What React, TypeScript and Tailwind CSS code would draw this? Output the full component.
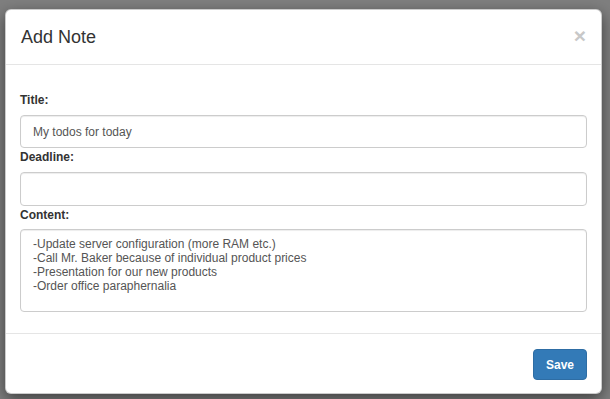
export default function App() {
  return (
    <div
      className="w-[610px] h-[399px] bg-[#7f7f7f] pt-[9px] pl-[5px] overflow-hidden"
      style={{ fontFamily: '"Liberation Sans", Arial, Helvetica, sans-serif' }}
    >
      <div className="w-[597px] h-[385px] bg-white rounded-[6px] border border-[rgba(0,0,0,0.2)] shadow-[0_5px_15px_rgba(0,0,0,0.5)] flex flex-col text-[#333]">
        <div className="h-[55px] px-[15px] flex items-center justify-between border-b border-[#e5e5e5] shrink-0">
          <h4 className="text-[18px] leading-[25px] text-[#333]">Add Note</h4>
          <span className="text-[21px] font-bold leading-none text-[#c8c8c8] -mt-[4px]">×</span>
        </div>
        <div className="flex-1 px-[14px] pt-[26px] flex flex-col">
          <label className="block text-[12px] font-bold leading-[19px] mb-[5px]">Title:</label>
          <div className="h-[33px] border border-[#ccc] rounded-[4px] shadow-[inset_0_1px_1px_rgba(0,0,0,0.075)] px-[12px] flex items-center text-[12px] text-[#555]">
            My todos for today
          </div>
          <label className="block text-[12px] font-bold leading-[19px] mb-[5px]">Deadline:</label>
          <div className="h-[34px] border border-[#ccc] rounded-[4px] shadow-[inset_0_1px_1px_rgba(0,0,0,0.075)]"></div>
          <label className="block text-[12px] font-bold leading-[19px] mb-[4px]">Content:</label>
          <div className="h-[83px] border border-[#ccc] rounded-[4px] shadow-[inset_0_1px_1px_rgba(0,0,0,0.075)] px-[12px] pt-[7px] text-[12px] leading-[14px] text-[#555]">
            <div>-Update server configuration (more RAM etc.)</div>
            <div>-Call Mr. Baker because of individual product prices</div>
            <div>-Presentation for our new products</div>
            <div>-Order office paraphernalia</div>
          </div>
        </div>
        <div className="h-[60px] border-t border-[#e5e5e5] px-[14px] flex items-start justify-end pt-[15px] shrink-0">
          <button className="h-[31px] px-[12px] bg-[#337ab7] border border-[#2e6da4] rounded-[4px] text-white text-[12px] font-bold">
            Save
          </button>
        </div>
      </div>
    </div>
  );
}
